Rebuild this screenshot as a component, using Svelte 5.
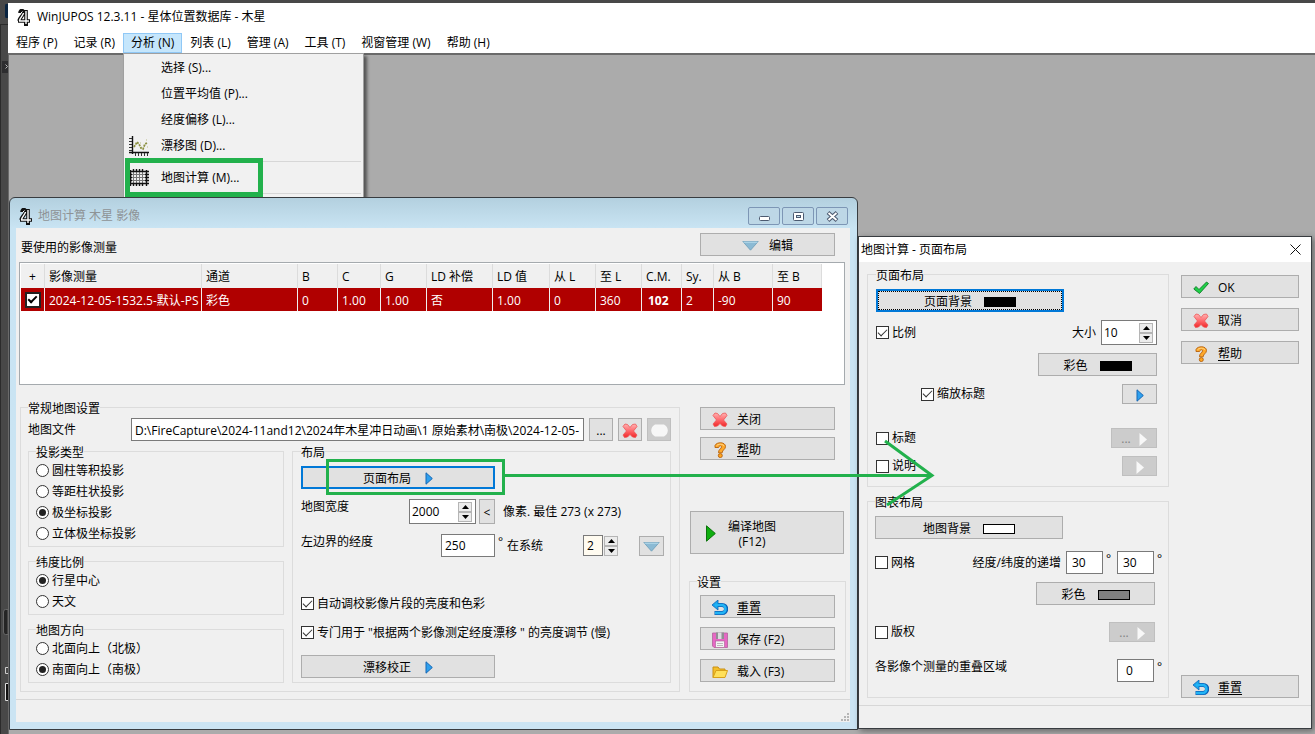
<script>
  const menus = ['程序 (P)', '记录 (R)', '分析 (N)', '列表 (L)', '管理 (A)', '工具 (T)', '视窗管理 (W)', '帮助 (H)']

  const columns = [
    { title: '+', width: 24 },
    { title: '影像测量', width: 157, value: '2024-12-05-1532.5-默认-PS' },
    { title: '通道', width: 96, value: '彩色' },
    { title: 'B', width: 40, value: '0' },
    { title: 'C', width: 43, value: '1.00' },
    { title: 'G', width: 46, value: '1.00' },
    { title: 'LD 补偿', width: 66, value: '否' },
    { title: 'LD 值', width: 57, value: '1.00' },
    { title: '从 L', width: 46, value: '0' },
    { title: '至 L', width: 46, value: '360' },
    { title: 'C.M.', width: 40, value: '102', bold: true },
    { title: 'Sy.', width: 32, value: '2' },
    { title: '从 B', width: 59, value: '-90' },
    { title: '至 B', width: 49, value: '90' }
  ]

  const radioGroups = [
    { name: 'projection', title: '投影类型', options: ['圆柱等积投影', '等距柱状投影', '极坐标投影', '立体极坐标投影'] },
    { name: 'latitude', title: '纬度比例', options: ['行星中心', '天文'] },
    { name: 'direction', title: '地图方向', options: ['北面向上（北极）', '南面向上（南极）'] }
  ]

  let selected = $state({ projection: '极坐标投影', latitude: '行星中心', direction: '南面向上（南极）' })
</script>

{#snippet icon(name)}
  {#if name === 'logo'}
    <svg class="icon" width="14" height="17" viewBox="0 0 14 17">
      <path d="M9 1 V16 M7 15.5 H11 M1 12 H13 M3 4 C3 0.500 7 1 6.500 4 C6 7 3 8 2 12" fill="none" stroke="#111" stroke-width="3.600" />
      <path d="M9 2 V15 M2 12 H12 M6.500 4 C6 7 3 8 2.500 12" fill="none" stroke="#fff" stroke-width="1.400" />
      <path d="M3.500 4.500 L5.500 2.500" stroke="#fff" />
    </svg>
  {:else if name === 'cross'}
    <svg class="icon" width="16" height="16" viewBox="0 0 16 16">
      <defs>
        <linearGradient id="red" x1="0" y1="0" x2="0" y2="1">
          <stop offset="0" stop-color="#ffb4b4" />
          <stop offset="0.5" stop-color="#ff6a6e" />
          <stop offset="1" stop-color="#f02828" />
        </linearGradient>
      </defs>
      <path d="M3 1 L5.5 1.5 L8 4.5 L10.5 1.5 L13.5 1 L15 3.5 L11.5 8 L15 12 L13.5 14.5 L10.5 14 L8 11.5 L5.5 14 L2.5 14.5 L1 12 L4.5 8 L1 3.5 Z" fill="url(#red)" stroke="#ee5555" stroke-width="0.8" stroke-linejoin="round" />
    </svg>
  {:else if name === 'help'}
    <svg class="icon" width="16" height="16" viewBox="0 0 16 16">
      <path d="M3 5.500 V3.500 C4.500 -0.300 13.500 -0.300 13.500 4.500 C13.500 7.500 10.200 7.800 10.200 10.800 H6.500 C6.300 7.200 9.600 6.800 9.600 4.800 C9.600 3.300 7 3.300 6.600 5.500 Z" fill="#ffa92b" stroke="#b5610c" stroke-width="0.9" stroke-linejoin="round" />
      <path d="M4.500 3.800 C6 1.800 11 1.600 12 4" fill="none" stroke="#ffd98c" />
      <circle cx="8.3" cy="13.6" r="2" fill="#ffa51f" stroke="#b5610c" stroke-width="0.9" />
    </svg>
  {:else if name === 'undo'}
    <svg class="icon" width="16" height="16" viewBox="0 0 16 16">
      <path d="M4 5 H10 C15.5 5 15.5 13 10 13 H2.5" fill="none" stroke="#0b62b8" stroke-width="4.2" />
      <path d="M0 5 L6 0 V10 Z" fill="#19a9ee" stroke="#0b62b8" stroke-width="0.8" />
      <path d="M3 5 H10 C14.6 5 14.6 13 10 13 H3" fill="none" stroke="#21b4f5" stroke-width="2.6" />
    </svg>
  {:else if name === 'save'}
    <svg class="icon" width="16" height="16" viewBox="0 0 16 16">
      <path d="M0.5 1 H15.5 V15.5 H2 L0.5 14 Z" fill="#e668c4" stroke="#b2639c" stroke-width="0.8" />
      <rect x="4" y="0.5" width="8" height="6.5" fill="#8f8f93" />
      <rect x="6" y="0.5" width="3.5" height="6.5" fill="#dcdce0" />
      <rect x="3.5" y="9" width="9" height="6.5" fill="#f3f3f3" stroke="#a85c95" stroke-width="0.6" />
      <path d="M5 11.5 H11 M5 13.5 H11" stroke="#aaa" stroke-width="0.8" />
    </svg>
  {:else if name === 'folder'}
    <svg class="icon" width="16" height="16" viewBox="0 0 16 16">
      <path d="M1 13.5 V3 H6 L7.5 5 H13 V7" fill="#f4bf2a" stroke="#c98f12" />
      <path d="M1 13.5 L4 6.5 H15.5 L13 13.5 Z" fill="#ffe05a" stroke="#d7a01a" />
    </svg>
  {:else if name === 'check'}
    <svg class="icon" width="16" height="16" viewBox="0 0 16 16">
      <path d="M0.8 9 L3 6.5 L6 9.5 L13.5 2 L15.5 3.5 L6.5 13.5 Z" fill="#1fd048" stroke="#0d7a26" stroke-width="0.9" stroke-linejoin="round" />
    </svg>
  {:else if name === 'play'}
    <svg class="icon" width="8" height="13" viewBox="0 0 8 13">
      <path d="M1 0.8 L7.3 6.5 L1 12.2 Z" fill="#2ea0ee" stroke="#1467b4" />
    </svg>
  {:else if name === 'play-off'}
    <svg class="icon" width="8" height="13" viewBox="0 0 8 13">
      <path d="M0.5 0 L8 6.5 L0.5 13 Z" fill="#f8f8f8" />
    </svg>
  {:else if name === 'run'}
    <svg class="icon" width="10" height="17" viewBox="0 0 10 17">
      <path d="M0.5 0.8 L9.3 8.5 L0.5 16.2 Z" fill="#0fae0f" stroke="#0b720b" />
    </svg>
  {:else if name === 'down'}
    <svg class="icon" width="17" height="10" viewBox="0 0 17 10">
      <path d="M0.8 0.5 H16.2 L8.5 9.2 Z" fill="#8bbad4" stroke="#6d9db8" stroke-width="0.8" />
      <path d="M1.5 1.2 H15.5" stroke="#b9dcec" />
    </svg>
  {:else if name === 'cloud'}
    <svg class="icon" width="17" height="13" viewBox="0 0 17 13">
      <path d="M4 0.500 H13 C18 3 18 10 13 12.500 H4 C-1 10 -1 3 4 0.500 Z" fill="#f7f7f7" />
    </svg>
  {:else if name === 'chart'}
    <svg class="icon" width="20" height="20" viewBox="0 0 20 20">
      <path d="M3.5 0 V18 M0 16.5 H20" stroke="#111" stroke-width="1.4" />
      <path d="M0 2.5 H3 M0 5.5 H3 M0 8.5 H3 M0 11.5 H3 M0 14.5 H3 M6.5 17 V20 M9.5 17 V20 M12.5 17 V20 M15.5 17 V20 M18.5 17 V20" stroke="#333" />
      <path d="M5 11 L8 6 L10 8 L12 12 L14 13 L16 8 L18 7" fill="none" stroke="#8a8f3e" stroke-width="1.800" stroke-dasharray="2 1" />
      <path d="M6 8 H7 M11 7 H12 M17 4 H18 M18 11 H19" stroke="#b9bb86" />
    </svg>
  {:else if name === 'grid'}
    <svg class="icon" width="20" height="18" viewBox="0 0 20 18">
      <path d="M1 5.500 H19 M1 8.500 H19 M1 11.500 H19 M4.500 1 V17 M7.500 1 V17 M10.500 1 V17 M13.500 1 V17" stroke="#777" />
      <path d="M0 2.500 H20 M0 14.500 H20 M1.500 1 V17 M17.500 1 V17" stroke="#111" stroke-width="1.400" />
      <path d="M0 5.500 H3 M0 8.500 H3 M0 11.500 H3 M16 5.500 H20 M16 8.500 H20 M16 11.500 H20 M4.500 0 V3 M7.500 0 V3 M10.500 0 V3 M13.500 0 V3 M4.500 14 V17 M7.500 14 V17 M10.500 14 V17 M13.500 14 V17" stroke="#111" stroke-width="1.400" />
    </svg>
  {/if}
{/snippet}

{#snippet spinButtons()}
  <span class="spin-buttons">
    <button aria-label="增加"><svg width="7" height="4" viewBox="0 0 7 4"><path d="M0 4 L3.5 0 L7 4 Z" /></svg></button>
    <button aria-label="减少"><svg width="7" height="4" viewBox="0 0 7 4"><path d="M0 0 L3.5 4 L7 0 Z" /></svg></button>
  </span>
{/snippet}

<div class="desktop">
  <svg class="edge" width="8" height="734" viewBox="0 0 8 734" aria-hidden="true">
    <path d="M0 24.5 H8 M0.5 24 V734" stroke="#2b2b2b" />
    <path d="M2 73 h6 v-12 h-6 z" fill="#2d2d2f" />
    <path d="M8 4 H6 Q5 4 5 6 V16 Q5 18 6 18 H8 Z" fill="#0a2440" />
    <path d="M5.500 64.500 L7.500 66.500 L5.500 68.500" fill="none" stroke="#bbb" />
    <path d="M8 609.5 H5.5 Q3.5 609.5 3.5 612 V632 Q3.5 634.500 5.500 634.500 H8 Z" fill="#252525" stroke="#666" />
    <path d="M8 667.500 H5.500 V673.500 H8" fill="none" stroke="#ccc" />
    <path d="M8 683.500 H5.500 V700.500 H8" fill="#111" stroke="#ddd" />
  </svg>

  <main>
    <header class="title-bar">
      {@render icon('logo')}
      <span>WinJUPOS 12.3.11 - 星体位置数据库 - 木星</span>
    </header>
    <nav class="menu-bar">
      {#each menus as menu, i}
        <div class="menu">
          <button class="menu-button" class:open={i === 2}>{menu}</button>
          {#if i === 2}
            <div class="menu-list">
              <button><i></i>选择 (S)...</button>
              <button><i></i>位置平均值 (P)...</button>
              <button><i></i>经度偏移 (L)...</button>
              <button><i>{@render icon('chart')}</i>漂移图 (D)...</button>
              <hr />
              <button><i>{@render icon('grid')}</i>地图计算 (M)...</button>
              <hr />
            </div>
          {/if}
        </div>
      {/each}
    </nav>

    <div class="workspace">
      <section class="map-window">
        <header class="glass-bar">
          {@render icon('logo')}
          <h2>地图计算 木星 影像</h2>
          <div class="glass-buttons">
            <button aria-label="最小化"><svg width="13" height="11" viewBox="0 0 13 11"><rect x="1.500" y="5.500" width="10" height="4" rx="1" fill="#fff" stroke="#4c5a70" /></svg></button>
            <button aria-label="最大化"><svg width="13" height="11" viewBox="0 0 13 11"><rect x="1.500" y="1.500" width="10" height="8" rx="1" fill="#fff" stroke="#4c5a70" /><rect x="4.500" y="4.500" width="4" height="2" fill="#c4deec" stroke="#4c5a70" /></svg></button>
            <button aria-label="关闭"><svg width="13" height="11" viewBox="0 0 13 11"><path d="M2 1.500 L11 9.500 M11 1.500 L2 9.500" stroke="#4c5a70" stroke-width="4" /><path d="M2.500 2 L10.500 9 M10.500 2 L2.500 9" stroke="#fff" stroke-width="1.800" /></svg></button>
          </div>
        </header>

        <div class="map-body">
          <div class="list-head">
            <span>要使用的影像测量</span>
            <button class="btn edit">{@render icon('down')}编辑</button>
          </div>
          <div class="list">
            <table>
              <colgroup>
                {#each columns as col}
                  <col style="width: {col.width}px" />
                {/each}
              </colgroup>
              <thead>
                <tr>
                  {#each columns as col}
                    <th>{col.title}</th>
                  {/each}
                </tr>
              </thead>
              <tbody>
                <tr>
                  {#each columns as col}
                    <td class:bold={col.bold}>
                      {#if col.value}
                        {col.value}
                      {:else}
                        <input class="row-check" type="checkbox" aria-label="使用" checked />
                      {/if}
                    </td>
                  {/each}
                </tr>
              </tbody>
            </table>
          </div>

          <div class="settings">
            <fieldset class="general">
              <legend>常规地图设置</legend>
              <div class="file-row">
                <label for="map-file">地图文件</label>
                <input id="map-file" class="box" type="text" value="D:\FireCapture\2024-11and12\2024年木星冲日动画\1 原始素材\南极\2024-12-05-1532.5" />
                <button class="btn square">...</button>
                <button class="btn square" aria-label="删除">{@render icon('cross')}</button>
                <button class="btn square" aria-label="预览" disabled>{@render icon('cloud')}</button>
              </div>
              <div class="columns">
                <div class="radios">
                  {#each radioGroups as group}
                    <fieldset>
                      <legend>{group.title}</legend>
                      {#each group.options as option}
                        <label class="option">
                          <input type="radio" name={group.name} value={option} bind:group={selected[group.name]} />
                          {option}
                        </label>
                      {/each}
                    </fieldset>
                  {/each}
                </div>
                <fieldset class="layout">
                  <legend>布局</legend>
                  <button class="btn wide focused">页面布局{@render icon('play')}</button>
                  <div class="row tall">
                    <label class="name width-name" for="map-width">地图宽度</label>
                    <span class="spin map-width">
                      <input id="map-width" type="text" value="2000" />
                      {@render spinButtons()}
                    </span>
                    <button class="btn less">&lt;</button>
                    <span>像素. 最佳 273 (x 273)</span>
                  </div>
                  <div class="row">
                    <label class="name left-name" for="left-edge">左边界的经度</label>
                    <input id="left-edge" class="box left-edge" type="text" value="250" />
                    <span class="degree">°</span>
                    <label class="system-name" for="system">在系统</label>
                    <input id="system" class="box system" type="text" value="2" />
                    {@render spinButtons()}
                    <button class="btn drop" aria-label="选择系统">{@render icon('down')}</button>
                  </div>
                  <label class="option auto"><input type="checkbox" checked />自动调校影像片段的亮度和色彩</label>
                  <label class="option"><input type="checkbox" checked />专门用于 "根据两个影像测定经度漂移 " 的亮度调节 (慢)</label>
                  <button class="btn wide">漂移校正{@render icon('play')}</button>
                </fieldset>
              </div>
            </fieldset>

            <div class="actions">
              <button class="btn side">{@render icon('cross')}关闭</button>
              <button class="btn side"><span class="slot">{@render icon('help')}</span><u>帮</u>助</button>
              <button class="btn compile">{@render icon('run')}<span>编译地图<br />(F12)</span></button>
              <fieldset>
                <legend>设置</legend>
                <button class="btn with-icon">{@render icon('undo')}<u>重置</u></button>
                <button class="btn with-icon">{@render icon('save')}保存 (F2)</button>
                <button class="btn with-icon">{@render icon('folder')}载入 (F3)</button>
              </fieldset>
            </div>
          </div>
          <footer>
            <svg width="9" height="9" viewBox="0 0 9 9" aria-hidden="true"><path d="M6 0 h2 v2 h-2 z M3 3 h2 v2 h-2 z M6 3 h2 v2 h-2 z M0 6 h2 v2 h-2 z M3 6 h2 v2 h-2 z M6 6 h2 v2 h-2 z" fill="#b5b5b5" /></svg>
          </footer>
        </div>
      </section>

      <section class="dialog">
        <header>
          <h2>地图计算 - 页面布局</h2>
          <button aria-label="关闭"><svg width="11" height="11" viewBox="0 0 11 11"><path d="M0.500 0.500 L10.500 10.500 M10.500 0.500 L0.500 10.500" stroke="#111" /></svg></button>
        </header>
        <div class="dialog-body">
          <div class="dialog-groups">
            <fieldset>
              <legend>页面布局</legend>
              <div class="line">
                <button class="btn background focused dotted">页面背景<span class="swatch black"></span></button>
              </div>
              <div class="line tall">
                <label class="option"><input type="checkbox" checked />比例</label>
                <label class="size-name" for="scale-size">大小</label>
                <span class="spin">
                  <input id="scale-size" type="text" value="10" />
                  {@render spinButtons()}
                </span>
              </div>
              <div class="line right">
                <button class="btn color">彩色<span class="swatch black"></span></button>
              </div>
              <div class="line low">
                <label class="option indent"><input type="checkbox" checked />缩放标题</label>
                <button class="btn go" aria-label="缩放标题">{@render icon('play')}</button>
              </div>
              <div class="line low title-line">
                <label class="option"><input type="checkbox" />标题</label>
                <button class="btn more" disabled>...{@render icon('play-off')}</button>
              </div>
              <div class="line low">
                <label class="option"><input type="checkbox" />说明</label>
                <button class="btn go" aria-label="说明" disabled>{@render icon('play-off')}</button>
              </div>
            </fieldset>
            <fieldset class="chart">
              <legend>图表布局</legend>
              <div class="line">
                <button class="btn background">地图背景<span class="swatch"></span></button>
              </div>
              <div class="line degrees grid-line">
                <label class="option"><input type="checkbox" />网格</label>
                <label class="step-name" for="step-lon">经度/纬度的递增</label>
                <input id="step-lon" class="box" type="text" value="30" />
                <span class="degree">°</span>
                <input class="box" type="text" aria-label="纬度的递增" value="30" />
                <span class="degree">°</span>
              </div>
              <div class="line right">
                <button class="btn color">彩色<span class="swatch gray"></span></button>
              </div>
              <div class="line low spaced">
                <label class="option"><input type="checkbox" />版权</label>
                <button class="btn more" disabled>...{@render icon('play-off')}</button>
              </div>
              <div class="line degrees spaced">
                <label class="overlap-name" for="overlap">各影像个测量的重叠区域</label>
                <input id="overlap" class="box overlap" type="text" value="0" />
                <span class="degree">°</span>
              </div>
            </fieldset>
          </div>
          <div class="dialog-actions">
            <button class="btn with-icon">{@render icon('check')}OK</button>
            <button class="btn with-icon">{@render icon('cross')}取消</button>
            <button class="btn with-icon"><span class="slot">{@render icon('help')}</span><u>帮</u>助</button>
            <button class="btn with-icon reset">{@render icon('undo')}<u>重置</u></button>
          </div>
        </div>
        <footer></footer>
      </section>
    </div>
  </main>

  <svg class="notes" viewBox="0 0 1315 734" aria-hidden="true">
    <g fill="none" stroke="#22b14c">
      <rect x="127.500" y="160.500" width="133" height="34" stroke-width="5" />
      <rect x="327.500" y="460.500" width="176" height="33" stroke-width="3" />
      <path d="M505 475.500 H932 M885 441 L932 475.500 L887 505" stroke-width="3" />
    </g>
  </svg>
</div>

<style>
  :global(body) {
    background: #484848;
    font: 12px/16px 'Open Sans', 'Noto Sans CJK SC', sans-serif;
    color: #000;
  }

  .desktop {
    position: relative;
    display: flex;
    min-height: 100vh;
    box-sizing: border-box;
    padding: 3px 0 0 8px;
    background: #484848;
  }

  .edge,
  .notes {
    position: absolute;
    top: 0;
    left: 0;
  }

  .notes {
    width: 100%;
    pointer-events: none;
  }

  main {
    flex: 1;
    display: flex;
    flex-direction: column;
    min-width: 0;
    background: #fff;
  }

  button,
  input,
  fieldset {
    box-sizing: border-box;
    margin: 0;
  }

  button,
  input {
    font: inherit;
    color: inherit;
  }

  button {
    padding: 0;
  }

  h2 {
    margin: 0;
    font-size: 12px;
    font-weight: 400;
  }

  u {
    text-underline-offset: 2px;
  }

  .icon {
    flex: none;
    display: block;
  }

  .title-bar {
    display: flex;
    align-items: center;
    gap: 6px;
    height: 28px;
    padding-left: 9px;
  }

  .menu-bar {
    display: flex;
    height: 22px;
  }

  .menu {
    position: relative;
  }

  .menu-button {
    height: 20px;
    margin-top: 2px;
    padding: 0 7px;
    border: 1px solid transparent;
    background: none;
  }

  .menu-button.open {
    border-color: #90c8f6;
    background: #c5e6fc;
  }

  .menu-list {
    position: absolute;
    top: 22px;
    left: 0;
    width: 241px;
    padding: 1px 1px 2px;
    box-sizing: border-box;
    border: 1px solid #a0a0a0;
    border-bottom: 0;
    background: #f1f1f1;
    box-shadow: 3px 3px 3px rgba(0, 0, 0, 0.5);
  }

  .menu-list button {
    display: flex;
    align-items: center;
    width: 100%;
    height: 26px;
    border: 0;
    background: none;
  }

  .menu-list i {
    width: 32px;
    padding-left: 4px;
  }

  .menu-list hr {
    height: 1px;
    margin: 2px 1px 3px 31px;
    border: 0;
    background: #d7d7d7;
  }

  .workspace {
    flex: 1;
    display: grid;
    grid-template-columns: 849fr 454fr;
    align-items: start;
    box-sizing: border-box;
    padding: 142px 3px 4px 0;
    border-top: 2px solid #6a6a6a;
    border-left: 1px solid #6a6a6a;
    background: #ababab;
  }

  .map-window,
  .dialog {
    position: relative;
    min-width: 0;
    box-sizing: border-box;
    border: 1px solid #383c40;
  }

  .map-window {
    padding: 0 7px 7px 6px;
    border-radius: 6px 6px 0 0;
    background: linear-gradient(#b3d0df, #c9e4f3 30px, #cbe4f3);
  }

  .glass-bar {
    display: flex;
    align-items: center;
    gap: 5px;
    height: 30px;
    padding: 6px 2px 0 3px;
    box-sizing: border-box;
    color: #8e9396;
  }

  .glass-buttons {
    display: flex;
    gap: 2px;
    margin-left: auto;
  }

  .glass-buttons button {
    display: flex;
    align-items: center;
    justify-content: center;
    width: 32px;
    height: 18px;
    border: 1px solid #7d96b5;
    border-radius: 2px;
    background: #bdd7e6;
  }

  .map-body {
    background: #f0f0f0;
  }

  .list-head {
    display: flex;
    align-items: flex-end;
    justify-content: space-between;
    padding: 5px 15px 6px 5px;
  }

  .btn {
    display: flex;
    align-items: center;
    justify-content: center;
    height: 23px;
    padding-top: 2px;
    border: 1px solid #adadad;
    background: #e1e1e1;
    white-space: nowrap;
  }

  .btn:disabled {
    border-color: #bfbfbf;
    background: #cccccc;
    color: #838383;
  }

  .edit {
    width: 135px;
    gap: 10px;
  }

  .list {
    min-height: 123px;
    margin: 0 5px 13px 3px;
    padding: 1px;
    box-sizing: border-box;
    border: 1px solid #a5aaae;
    background: #fff;
  }

  table {
    width: 801px;
    table-layout: fixed;
    border-collapse: separate;
    border-spacing: 0;
  }

  th,
  td {
    padding: 2px 0 0 4px;
    box-sizing: border-box;
    border-right: 1px solid #dcdcdc;
    overflow: hidden;
    font-weight: 400;
    text-align: left;
    white-space: nowrap;
  }

  th {
    height: 24px;
    background: #f0f0f0;
  }

  th:first-child,
  td:first-child {
    padding-left: 0;
    text-align: center;
  }

  td {
    height: 23px;
    border-color: #f0f0f0;
    background: #b00000;
    color: #fff;
  }

  td:first-child {
    padding-top: 0;
  }

  td:last-child {
    border-color: #b00000;
  }

  td.bold {
    padding-left: 6px;
    font-weight: 700;
  }

  input[type='checkbox'],
  input[type='radio'] {
    appearance: none;
    flex: none;
    display: grid;
    place-content: center;
    width: 13px;
    height: 13px;
    border: 1px solid #333;
    background: #fff;
  }

  input[type='radio'] {
    border-radius: 50%;
  }

  input[type='radio']:checked::before {
    content: '';
    width: 7px;
    height: 7px;
    border-radius: 50%;
    background: #222;
  }

  input[type='checkbox']:checked::before {
    content: '';
    width: 8px;
    height: 4px;
    margin-bottom: 3px;
    border: solid #333;
    border-width: 0 0 1px 1px;
    transform: rotate(-45deg);
  }

  input.row-check[type='checkbox'] {
    width: 16px;
    height: 16px;
    margin: 0 auto;
    border: 2px solid #222;
  }

  input.row-check[type='checkbox']:checked::before {
    width: 7px;
    height: 3px;
    border-color: #000;
    border-width: 0 0 2px 2px;
  }

  .settings {
    display: flex;
    gap: 9px;
    padding: 0 4px;
  }

  fieldset {
    min-width: 0;
    padding: 0 7px 2px;
    border: 1px solid #dcdcdc;
  }

  legend {
    height: 18px;
    padding: 4px 0 0;
    box-sizing: border-box;
    line-height: 14px;
  }

  .general {
    flex: 1;
    padding: 0 8px 8px 7px;
  }

  .file-row {
    display: flex;
    align-items: center;
    gap: 5px;
    padding: 2px 0 1px;
  }

  .file-row label {
    width: 98px;
  }

  .box {
    height: 23px;
    padding: 0 3px;
    border: 1px solid #7a7a7a;
    background: #fff;
  }

  .file-row .box {
    flex: 1;
    min-width: 0;
  }

  .square {
    width: 24px;
  }

  .columns {
    display: grid;
    grid-template-columns: 256fr 379fr;
    gap: 8px;
  }

  .radios {
    display: flex;
    flex-direction: column;
    gap: 5px;
  }

  .option {
    display: flex;
    align-items: center;
    gap: 3px;
    height: 19px;
    white-space: nowrap;
  }

  .radios .option {
    height: 21px;
  }

  .layout {
    padding: 0 6px 4px 8px;
  }

  .wide {
    width: 194px;
    gap: 14px;
    margin-top: 6px;
  }

  .option + .wide {
    margin-top: 13px;
  }

  .layout .option + .option {
    margin-top: 10px;
  }

  .focused {
    border: 2px solid #0078d7;
  }

  .row {
    display: flex;
    align-items: center;
    height: 23px;
    margin-top: 10px;
    white-space: nowrap;
  }

  .row.tall {
    height: 25px;
  }

  .name {
    align-self: flex-start;
  }

  .width-name {
    width: 108px;
  }

  .left-name {
    width: 140px;
  }

  .spin {
    display: flex;
    align-items: center;
    width: 56px;
    height: 25px;
    padding-right: 3px;
    box-sizing: border-box;
    border: 1px solid #7a7a7a;
    background: #fff;
  }

  .map-width {
    width: 67px;
  }

  .spin input {
    flex: 1;
    min-width: 0;
    padding: 0 2px;
    border: 0;
    background: none;
  }

  .spin-buttons {
    display: flex;
    flex-direction: column;
  }

  .spin-buttons button {
    display: flex;
    align-items: center;
    justify-content: center;
    width: 14px;
    height: 10px;
    border: 1px solid #b5b5b5;
    background: #ececec;
  }

  .less {
    width: 16px;
    height: 25px;
    margin: 0 8px 0 3px;
  }

  .left-edge {
    width: 54px;
  }

  .degree {
    align-self: flex-start;
    width: 9px;
    padding-left: 3px;
  }

  .system-name {
    width: 76px;
  }

  .system {
    width: 20px;
    height: 21px;
    margin-right: 1px;
    background: #fffbf0;
  }

  .drop {
    width: 25px;
    height: 20px;
    margin-left: auto;
  }

  .auto {
    margin-top: 37px;
  }

  .actions {
    display: flex;
    flex-direction: column;
    width: 157px;
    padding-top: 9px;
  }

  .side,
  .with-icon {
    justify-content: flex-start;
    padding-left: 11px;
  }

  .side .icon,
  .with-icon .icon,
  .slot {
    margin-right: 9px;
  }

  .side .slot .icon,
  .with-icon .slot .icon {
    margin: 0;
  }

  .side {
    margin: 0 11px 7px;
  }

  .compile {
    justify-content: flex-start;
    gap: 12px;
    height: 43px;
    margin: 44px 2px 18px 1px;
    padding-left: 15px;
    line-height: 15px;
  }

  .compile span {
    text-align: center;
  }

  .actions fieldset {
    padding: 5px 10px 9px;
  }

  .actions legend {
    margin-left: -3px;
  }

  .actions fieldset .btn {
    width: 100%;
  }

  .actions fieldset .btn + .btn {
    margin-top: 9px;
  }

  footer {
    display: flex;
    align-items: flex-end;
    justify-content: flex-end;
    height: 22px;
    margin-top: 7px;
    border-top: 1px solid #d7d7d7;
  }

  .dialog {
    margin-top: 39px;
    background: #f0f0f0;
    box-shadow: 2px 2px 6px rgba(0, 0, 0, 0.4);
  }

  .dialog header {
    display: flex;
    align-items: center;
    justify-content: space-between;
    height: 25px;
    padding: 0 10px 0 2px;
    background: #fff;
  }

  .dialog header button {
    display: flex;
    border: 0;
    background: none;
  }

  .dialog-body {
    display: flex;
    gap: 12px;
    padding: 3px 12px 0 8px;
  }

  .dialog-groups {
    flex: 1;
    display: flex;
    flex-direction: column;
    gap: 5px;
  }

  .dialog-groups fieldset {
    padding: 6px 0 10px 8px;
  }

  .dialog-groups .chart {
    padding: 6px 0 15px 7px;
  }

  .line {
    display: flex;
    align-items: center;
    justify-content: space-between;
    height: 23px;
    padding-right: 11px;
    white-space: nowrap;
  }

  .chart .line {
    padding-right: 13px;
  }

  .line + .line {
    margin-top: 8px;
  }

  .line.tall {
    height: 25px;
  }

  .line.low,
  .line.low .btn {
    height: 20px;
  }

  .line.right {
    justify-content: flex-end;
  }

  .chart .line.degrees {
    padding-right: 0;
  }

  .line.title-line {
    margin-top: 24px;
  }

  .line.grid-line {
    margin-top: 12px;
  }

  .line.spaced {
    margin-top: 17px;
  }

  .background {
    width: 188px;
    gap: 12px;
  }

  .dotted {
    outline: 1px dotted #000;
    outline-offset: -3px;
  }

  .swatch {
    width: 32px;
    height: 10px;
    box-sizing: border-box;
    border: 1px solid #000;
    background: #fff;
  }

  .swatch.black {
    background: #000;
  }

  .swatch.gray {
    background: #808080;
  }

  .color {
    width: 119px;
    gap: 12px;
  }

  .size-name,
  .step-name {
    margin: 0 5px 0 auto;
  }

  .indent {
    margin-left: 45px;
  }

  .go {
    width: 35px;
  }

  .more {
    width: 46px;
    gap: 8px;
  }

  .line .box {
    width: 37px;
    padding-left: 5px;
  }

  .line .overlap {
    padding-left: 8px;
  }

  .line .degree {
    width: 11px;
  }

  .overlap-name {
    flex: 1;
    align-self: flex-start;
  }

  .dialog-actions {
    display: flex;
    flex-direction: column;
    gap: 10px;
    width: 118px;
    padding-top: 10px;
  }

  .reset {
    margin-top: auto;
  }
</style>
